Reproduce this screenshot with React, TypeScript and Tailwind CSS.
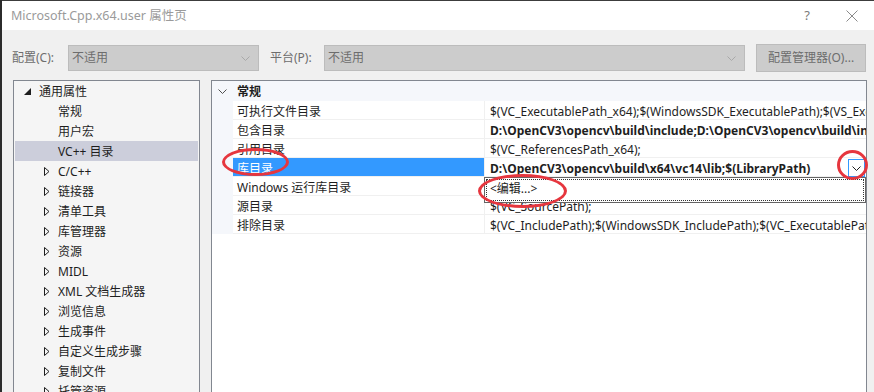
import React from "react";

const FONT = { fontFamily: '"Noto Sans", "Noto Sans CJK SC", sans-serif' };

type TreeItem = { label: string; kind: "open" | "leaf" | "closed"; selected?: boolean };

const TREE: TreeItem[] = [
  { label: "通用属性", kind: "open" },
  { label: "常规", kind: "leaf" },
  { label: "用户宏", kind: "leaf" },
  { label: "VC++ 目录", kind: "leaf", selected: true },
  { label: "C/C++", kind: "closed" },
  { label: "链接器", kind: "closed" },
  { label: "清单工具", kind: "closed" },
  { label: "库管理器", kind: "closed" },
  { label: "资源", kind: "closed" },
  { label: "MIDL", kind: "closed" },
  { label: "XML 文档生成器", kind: "closed" },
  { label: "浏览信息", kind: "closed" },
  { label: "生成事件", kind: "closed" },
  { label: "自定义生成步骤", kind: "closed" },
  { label: "复制文件", kind: "closed" },
  { label: "托管资源", kind: "closed" },
];

const PROPS = [
  { name: "可执行文件目录", value: "$(VC_ExecutablePath_x64);$(WindowsSDK_ExecutablePath);$(VS_ExecutablePath);$(MSBuild_ExecutablePath)" },
  { name: "包含目录", value: "D:\\OpenCV3\\opencv\\build\\include;D:\\OpenCV3\\opencv\\build\\include\\opencv;D:\\OpenCV3\\opencv\\build\\include\\opencv2", bold: true },
  { name: "引用目录", value: "$(VC_ReferencesPath_x64);" },
  { name: "库目录", value: "D:\\OpenCV3\\opencv\\build\\x64\\vc14\\lib;$(LibraryPath)", bold: true, selected: true },
  { name: "Windows 运行库目录", value: "$(WindowsSDK_MetadataPath);" },
  { name: "源目录", value: "$(VC_SourcePath);" },
  { name: "排除目录", value: "$(VC_IncludePath);$(WindowsSDK_IncludePath);$(VC_ExecutablePath_x64);$(VC_LibraryPath_x64)" },
];

function Chevron({ className }: { className?: string }) {
  return (
    <svg width="9" height="5" viewBox="0 0 9 5" className={className}>
      <path d="M0.5 0.5 L4.5 4.5 L8.5 0.5" fill="none" stroke="currentColor" strokeWidth="1" />
    </svg>
  );
}

function Combo({ width, text }: { width: string; text: string }) {
  return (
    <div className={`${width} h-[26px] bg-[#cccccc] border border-[#bcbcbc] flex items-center justify-between pl-[3px] pr-[8px] text-[#6d6d6d]`}>
      <span>{text}</span>
      <Chevron className="text-[#a8a8a8]" />
    </div>
  );
}

function TreeRow({ item }: { item: TreeItem }) {
  return (
    <div className={`h-[20px] flex items-center ${item.selected ? "bg-[#cccedb]" : ""}`}>
      {item.kind === "open" && (
        <svg width="7" height="7" viewBox="0 0 7 7" className="ml-[9px] mr-[8px]">
          <path d="M7 0 L7 7 L0 7 Z" fill="#1e1e1e" />
        </svg>
      )}
      {item.kind === "closed" && (
        <svg width="6" height="9" viewBox="0 0 6 9" className="ml-[29px] mr-[8px] mt-[1px]">
          <path d="M0.5 0.5 L5 4.5 L0.5 8.5 Z" fill="none" stroke="#1e1e1e" strokeWidth="1" />
        </svg>
      )}
      {item.kind === "leaf" && <span className="w-[43px] shrink-0" />}
      <span className="text-[#1e1e1e] whitespace-nowrap pt-[2px]">{item.label}</span>
    </div>
  );
}

export default function App() {
  return (
    <div className="relative w-[874px] h-[392px] overflow-hidden flex bg-[#2b2b2b] text-[12px] leading-none" style={FONT}>
      <div className="w-[2px] shrink-0" />
      <div className="flex-1 flex flex-col bg-[#f0f0f0] border-t border-[#3c3c3c]">
        {/* title bar */}
        <div className="h-[29px] bg-white flex items-center justify-between pl-[9px] pr-[16px] text-[#9a9a9a]">
          <span className="text-[12.5px] pt-[2px]">Microsoft.Cpp.x64.user 属性页</span>
          <div className="flex items-center gap-[36px] text-[#7a7a7a]">
            <span className="text-[13px]">?</span>
            <svg width="12" height="12" viewBox="0 0 12 12">
              <path d="M0.5 0.5 L11.5 11.5 M11.5 0.5 L0.5 11.5" stroke="#8a8a8a" strokeWidth="1" />
            </svg>
          </div>
        </div>

        {/* toolbar */}
        <div className="flex items-center pt-[14px] pl-[10px] text-[#6d6d6d]">
          <span className="w-[56px]">配置(C):</span>
          <Combo width="w-[191px]" text="不适用" />
          <span className="w-[54px] ml-[11px]">平台(P):</span>
          <Combo width="w-[421px]" text="不适用" />
          <div className="ml-[11px] w-[110px] h-[28px] bg-[#cccccc] border border-[#bcbcbc] flex items-center justify-center">
            配置管理器(O)...
          </div>
        </div>

        {/* content */}
        <div className="flex flex-1 min-h-0 pt-[8px] pl-[11px]">
          <div className="w-[187px] border border-[#828790] border-b-0 bg-[#f5f5f5] p-[1px] pt-0 overflow-hidden">
            {TREE.map((t) => (
              <TreeRow key={t.label} item={t} />
            ))}
          </div>

          <div className="ml-[11px] w-[656px] border border-[#828790] border-b-0 bg-white overflow-hidden">
            {/* category */}
            <div className="h-[20px] flex items-center bg-[#f5f7fb]">
              <span className="w-[21px] flex justify-center pt-[1px]">
                <Chevron className="text-[#505050]" />
              </span>
              <span className="font-bold text-[#1e1e1e] pl-[4px] pt-[2px]">常规</span>
            </div>
            {PROPS.map((p) => (
              <div key={p.name} className="h-[19px] flex">
                <div className="w-[21px] shrink-0 bg-[#f5f7fb]" />
                <div
                  className={`w-[251px] shrink-0 flex items-center pl-[4px] pt-[3px] border-b border-[#f0f0f0] ${
                    p.selected ? "bg-[#3399ff] text-white" : "text-[#1e1e1e]"
                  }`}
                >
                  {p.name}
                </div>
                <div className="relative flex-1 min-w-0 flex items-center border-l border-b border-[#f0f0f0] pl-[5px]">
                  <span className={`whitespace-nowrap pt-[3px] ${p.bold ? "font-bold" : ""} text-[#1e1e1e]`}>{p.value}</span>
                  {p.selected && (
                    <>
                      <div className="absolute right-[1px] top-[1px] w-[17px] h-[18px] bg-white border border-[#3399ff] flex items-center justify-center">
                        <Chevron className="text-[#1e1e1e]" />
                      </div>
                      <div className="absolute left-[-1px] right-0 top-[19px] h-[26px] bg-white border border-[#646464] z-10 p-[1px]">
                        <div className="h-full border border-dotted border-[#333] flex items-center pl-[3px] pb-[2px] text-[#1e1e1e]">
                          &lt;编辑...&gt;
                        </div>
                      </div>
                    </>
                  )}
                </div>
              </div>
            ))}
          </div>
        </div>
      </div>

      {/* red annotation ellipses */}
      <div className="absolute left-[222px] top-[148px] w-[67px] h-[28px] rounded-[50%] border-[3px] border-[#e6363e] z-20" />
      <div className="absolute left-[478px] top-[174px] w-[89px] h-[34px] rounded-[50%] border-[3px] border-[#e6363e] z-20" />
      <div className="absolute left-[837px] top-[150px] w-[31px] h-[30px] rounded-[50%] border-[3px] border-[#e6363e] z-20" />
    </div>
  );
}
